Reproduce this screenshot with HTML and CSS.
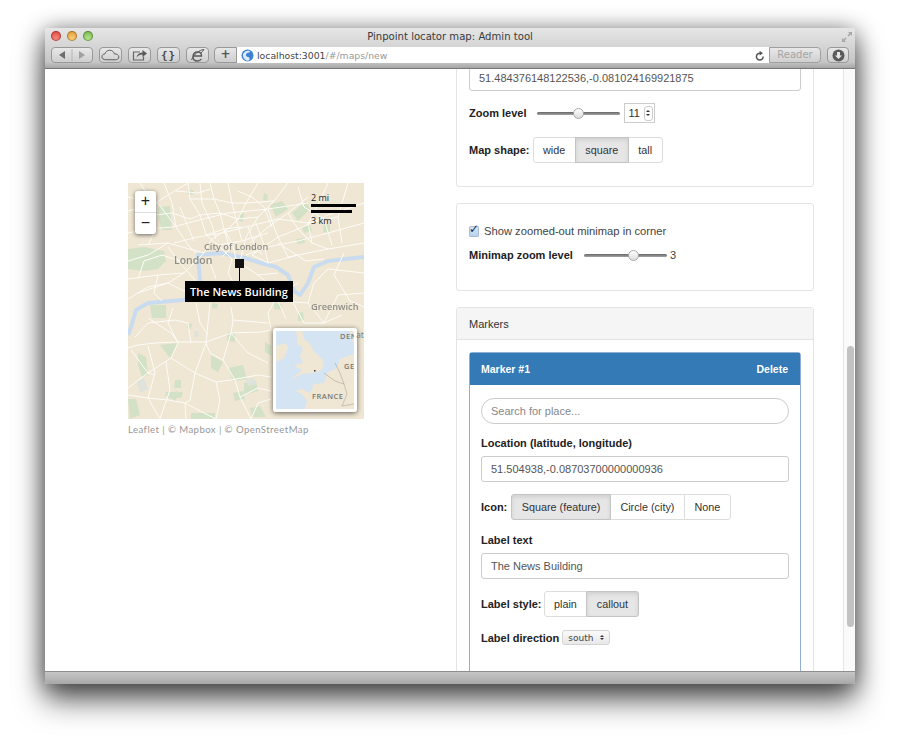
FILE: index.html
```html
<!DOCTYPE html>
<html lang="en">
  <head>
    <meta charset="UTF-8" />
    <title>Pinpoint locator map: Admin tool</title>
    <link rel="stylesheet" href="styles.css">
  </head>
  <body>
    <div class="window">
      <div class="chrome">
        <div class="titleRow">
          <div class="lights">
            <span class="light red"></span>
            <span class="light amber"></span>
            <span class="light green"></span>
          </div>
          <div class="windowTitle">Pinpoint locator map: Admin tool</div>
          <svg class="fullscreen" width="12" height="12" viewBox="0 0 12 12">
            <path d="M7 1h4v4L9.600 3.600 7.600 5.600 6.400 4.400 8.400 2.400zM5 11H1V7l1.400 1.400 2-2 1.200 1.200-2 2z" fill="#a8a8a8" />
          </svg>
        </div>
        <div class="toolbar">
          <div class="tool backForward">
            <svg width="40" height="14" viewBox="0 0 40 14">
              <path d="M13 3v8L7 7z" fill="#6e6e6e" />
              <path d="M20 1v12" stroke="#b4b4b4" />
              <path d="M27 3v8l6-4z" fill="#a0a0a0" />
            </svg>
          </div>
          <div class="tool wide">
            <svg width="19" height="12" viewBox="0 0 20 12">
              <path d="M5 11C2.500 11 1 9.500 1 7.800 1 6 2.400 5 4 5 4.800 2.500 6.800 1 9.200 1c2.600 0 4.400 1.700 4.800 3.800 2.700-.2 4.800 1.300 4.800 3.300S17 11 15 11z" fill="none" stroke="#5a5a5a" />
            </svg>
          </div>
          <div class="tool wide">
            <svg width="16" height="12" viewBox="0 0 16 12">
              <path d="M8 3H1.500v8h10V7.500" fill="none" stroke="#666" stroke-width="1.200" />
              <path d="M4.500 8.500c.5-3 2.500-4.800 6-5V1L15 4.500 10.500 8V5.500C8 5.500 6 6.500 4.500 8.500z" fill="#5a5a5a" />
            </svg>
          </div>
          <div class="tool wide braces">{}</div>
          <div class="tool wide">
            <svg width="16" height="14" viewBox="0 0 16 14">
              <path d="M3 8h8.500C11.500 5.500 10 4 7.800 4 5 4 3 6 3 9c0 2.500 2 4 4.500 4 1.800 0 3-.7 3.800-2" fill="none" stroke="#5a5a5a" stroke-width="1.400" />
              <path d="M1.500 12C4 6 9 2 14 1.500c-1 1.500-2 2.500-3 3.500" fill="none" stroke="#5a5a5a" />
            </svg>
          </div>
          <div class="addressBar">
            <div class="plusButton">+</div>
            <div class="urlField">
              <svg class="globe" width="13" height="13" viewBox="0 0 13 13">
                <circle cx="6.500" cy="6.500" r="6" fill="#3d82d6" />
                <path d="M2 5c1.500-3 4.500-4 6.500-3 1 .6.500 1.500-.5 1.500S5.500 4 5 5.500 6 8 7 8s2 1 1.500 2.500-2 1.500-3 1C3 10.500 1.500 8 2 5z" fill="#dcebfa" />
              </svg>
              <span class="urlHost">localhost:3001</span><span class="urlPath">/#/maps/new</span>
              <svg class="reload" width="10" height="11" viewBox="0 0 10 11">
                <path d="M8.200 6.500A3.400 3.400 0 1 1 5 3.200" fill="none" stroke="#555" stroke-width="1.500" />
                <path d="M4.600 .8 8 3.200 4.600 5.400z" fill="#555" />
              </svg>
            </div>
            <div class="readerButton">Reader</div>
          </div>
          <div class="tool download">
            <svg width="13" height="13" viewBox="0 0 13 13">
              <circle cx="6.500" cy="6.500" r="6" fill="#5a5a5a" />
              <path d="M5 3h3v3.500h2l-3.500 3.500L3 6.500h2z" fill="#e4e4e4" />
            </svg>
          </div>
        </div>
      </div>

      <div class="content">
        <div class="mapColumn">
          <div class="map">
            <svg class="mapTiles" width="236" height="236" viewBox="0 0 236 236">
              <rect width="236" height="236" fill="#efe6d3" />
              <g fill="#d3e2c6">
                <path d="M0 66l16-2 20 4 2 10-8 8-14 2-16-2z" />
                <path d="M30 24l12-1 2 24-10 0-4-12z" />
                <path d="M22 122h16v13H24z" />
                <path d="M32 162l18-2-8 15z" />
                <path d="M83 172l12 7-5 10-7-4z" />
                <path d="M10 170l8 4 2 18-6 2-4-12z" />
                <path d="M100 185l15-3 4 14-14 2z" />
                <path d="M37 209h18l-2 6H40z" />
                <path d="M47 197h6v8h-7z" />
                <path d="M100 149l7 1v9l-8-1z" />
                <path d="M63 230h24v6H63z" />
                <path d="M122 225l10-2 6 11h-14z" />
                <path d="M137 159l6 4v10l-6-4z" />
                <path d="M116 200l12-2 2 10-14 4z" />
                <path d="M105 210l10-2 2 8-10 2z" />
                <path d="M36 212l14-4-2 10z" />
                <path d="M0 216l8 0 4 16-10 4z" />
                <path d="M142 22l12-4 6 8-12 8z" />
                <path d="M164 30l14-12 4 8-12 12z" />
                <path d="M174 44l8-2 2 6-8 2z" />
                <path d="M60 6l6 2-2 4-5-1z" />
                <path d="M136 10l4 2-1 6-4-1z" />
                <path d="M112 30l4 1-1 8-4-1z" />
                <path d="M196 40l6 2 0 8-7-1z" />
                <path d="M168 56l8-1 1 5-8 1z" />
                <path d="M84 120l6 1-1 5-5-1z" />
                <path d="M60 140l4 1-1 5-4-1z" />
                <path d="M170 130l5-1 1 8-6 1z" />
                <path d="M146 120l8 1-1 6-7-1z" />
              </g>
              <g fill="#dfe3dc">
                <path d="M8 198l8-2 4 10-8 4z" />
                <path d="M118 196l8-1 2 6-8 2z" />
                <path d="M66 148l4 0 1 6-4 0z" />
              </g>
              <path d="M0 152 3 144 8 127 20 120 55 117 66 112 72 97 70 72 93 70 117 75 133 80 148 84 160 92 166 108 172 112 180 100 186 84 200 78 236 74" fill="none" stroke="#c9dcef" stroke-width="4" stroke-linejoin="round" />
              <g fill="none" stroke="#fdfcf8" stroke-width="1">
                <path d="M0 50 20 46 45 44 75 36 100 30 140 26 180 20" />
                <path d="M0 28 25 22 40 12 60 0" />
                <path d="M0 14 30 20 48 44 60 62 68 70" />
                <path d="M12 0 24 18 28 46 20 62" />
                <path d="M60 0 62 16 72 32 78 52 90 62 104 76" />
                <path d="M82 0 86 16 92 30 96 46 104 60 108 76" />
                <path d="M100 0 104 20 108 36 114 58" />
                <path d="M130 0 118 20 110 36 100 46 84 56 76 70" />
                <path d="M160 0 146 18 130 34 118 54 114 70 112 80" />
                <path d="M180 14 160 30 140 44 122 60" />
                <path d="M236 20 200 32 170 46 150 54 124 72" />
                <path d="M236 40 200 50 170 58 140 64 118 72" />
                <path d="M46 60 70 54 94 50 118 44 150 36 180 40 210 34" />
                <path d="M10 62 40 60 76 70 56 90 40 100 10 110" />
                <path d="M40 64 52 80 66 96 74 114" />
                <path d="M0 96 30 92 56 90" />
                <path d="M0 116 20 104 40 100 60 110" />
                <path d="M104 76 100 90 112 112" />
                <path d="M80 74 88 96" />
                <path d="M112 80 130 92 150 90" />
                <path d="M124 72 140 80 170 72 200 66 236 60" />
                <path d="M150 54 160 74 170 72" />
                <path d="M236 90 200 86 186 100 180 120 196 140" />
                <path d="M170 100 150 112 140 130 143 147" />
                <path d="M236 110 210 112 196 140" />
                <path d="M150 118 180 120" />
                <path d="M200 0 190 22 180 40 184 60 200 66" />
                <path d="M220 0 210 34 214 60" />
                <path d="M36 0 44 20 48 44" />
                <path d="M72 32 92 30 110 36 130 34" />
                <path d="M78 52 96 46 114 44" />
                <path d="M62 16 86 16 104 20 118 20 146 18" />
                <path d="M44 30 62 36 72 32" />
                <path d="M0 78 20 72 40 60" />
                <path d="M90 62 114 58 140 50" />
                <path d="M128 40 136 62 140 80" />
                <path d="M160 30 170 46 184 60" />
                <path d="M140 26 146 44 150 54" />
                <path d="M30 92 26 110 34 118" />
                <path d="M48 8 70 10 82 6" />
                <path d="M8 34 28 32 44 30" />
                <path d="M52 24 60 44 66 58" />
                <path d="M72 0 74 20 84 42 88 56" />
                <path d="M110 8 124 14 136 24 144 44" />
                <path d="M120 44 126 60 134 72" />
                <path d="M96 46 102 66 94 74" />
                <path d="M170 4 176 24 196 36 204 62" />
                <path d="M150 60 178 78 196 76" />
                <path d="M216 70 206 92 222 118 236 124" />
                <path d="M160 110 176 140 196 140 214 132" />
                <path d="M58 80 34 72 16 78 10 96" />
                <path d="M130 92 144 104 150 118 158 136" />
                <path d="M0 165 10 162 27 160 50 159 78 159 103 150 133 149 143 147" />
                <path d="M78 160 82 170 95 177 107 197 112 214 123 236" />
                <path d="M82 120 78 160 67 190 62 217 57 220" />
                <path d="M43 175 67 190 88 199 103 197 130 192 143 194" />
                <path d="M0 205 17 192 43 175 50 160 40 140 45 125" />
                <path d="M88 199 92 217 88 236" />
                <path d="M0 212 20 215 40 217 57 220 58 236" />
                <path d="M3 167 20 190 27 192" />
                <path d="M20 163 27 190 20 215 32 236" />
                <path d="M38 179 42 207 32 236" />
                <path d="M68 120 72 140 80 152" />
                <path d="M103 124 105 137 103 150 95 177" />
                <path d="M105 137 140 140" />
                <path d="M20 135 43 150 50 159" />
                <path d="M63 160 60 140 47 137 20 140 7 154" />
                <path d="M112 214 130 205 143 208" />
                <path d="M57 220 76 230 88 236" />
                <path d="M140 180 120 170 103 150" />
                <path d="M123 236 130 220 143 216" />
              </g>
              <text class="cityLabel" x="76" y="67">City of London</text>
              <text class="townLabel" x="46" y="81">London</text>
              <text class="cityLabel" x="183" y="127">Greenwich</text>
            </svg>

            <div class="zoomControl">
              <div class="zoomStep">+</div>
              <div class="zoomStep">−</div>
            </div>

            <div class="scale">
              <div>2 mi</div>
              <div class="scaleBar miles"></div>
              <div class="scaleBar kilometres"></div>
              <div>3 km</div>
            </div>

            <div class="marker">
              <div class="markerSquare"></div>
              <div class="markerStem"></div>
              <div class="markerLabel">The News Building</div>
            </div>

            <svg class="minimap" width="84" height="84" viewBox="0 0 78 78">
              <rect width="78" height="78" fill="#d5e4f2" />
              <g fill="#efe6d3">
                <path d="M20 0H26L28 8 34 13 38 20 46 28 48 35 44 40 36 42 26 43 16 48 21 43 26 39 22 37 18 34 27 32 25 27 24 25 27 17 21 13 21 7z" />
                <path d="M0 15 10 12 12 17 8 27 0 31z" />
                <path d="M19 60 26 58 34 62 38 53 48 52 51 42 61 37 64 28 78 23V78H29L31 70 26 63z" />
                <path d="M74 0H78V13L75 8z" />
              </g>
              <path d="M48 42 59 50 68 53 71 63 66 75 78 73M59 32 64 42 68 53" fill="none" stroke="#a09d8e" stroke-width=".5" />
              <rect x="38" y="39" width="1.500" height="1.500" fill="#333" />
              <text class="miniLabel" x="36" y="68">FRANCE</text>
              <text class="miniLabel" x="64" y="8">DEN</text>
              <text class="miniLabel" x="68" y="38">GE</text>
            </svg>
            <span class="mapFragment">at</span>
          </div>
          <div class="attribution">Leaflet | © Mapbox | © OpenStreetMap</div>
        </div>

        <div class="formColumn">
          <div class="panel firstPanel">
            <div class="textInput cutOff">51.484376148122536,-0.081024169921875</div>
            <div class="inlineRow zoomRow">
              <label class="fieldLabel">Zoom level</label>
              <input class="slider" type="range" min="1" max="21" value="11" />
              <div class="numberBox">
                <span>11</span>
                <span class="spinner"><i class="up"></i><i class="down"></i></span>
              </div>
            </div>
            <div class="inlineRow shapeRow">
              <label class="fieldLabel">Map shape:</label>
              <div class="buttonGroup">
                <button class="groupBtn">wide</button>
                <button class="groupBtn active">square</button>
                <button class="groupBtn">tall</button>
              </div>
            </div>
          </div>

          <div class="panel minimapPanel">
            <label class="checkRow">
              <input type="checkbox" checked />
              Show zoomed-out minimap in corner
            </label>
            <div class="inlineRow minimapRow">
              <label class="fieldLabel">Minimap zoom level</label>
              <input class="slider" type="range" min="-5" max="8" value="3" />
              <span class="sliderValue">3</span>
            </div>
          </div>

          <div class="panel markersPanel">
            <div class="panelHeading">Markers</div>
            <div class="panelBody">
              <div class="markerPanel">
                <div class="markerHeading">
                  <span>Marker #1</span>
                  <span>Delete</span>
                </div>
                <div class="markerBody">
                  <input class="searchInput" type="text" placeholder="Search for place..." />
                  <div class="stackLabel">Location (latitude, longitude)</div>
                  <div class="textInput">51.504938,-0.08703700000000936</div>
                  <div class="inlineRow iconRow">
                    <label class="fieldLabel">Icon:</label>
                    <div class="buttonGroup">
                      <button class="groupBtn active">Square (feature)</button>
                      <button class="groupBtn">Circle (city)</button>
                      <button class="groupBtn">None</button>
                    </div>
                  </div>
                  <div class="stackLabel labelTextHead">Label text</div>
                  <div class="textInput">The News Building</div>
                  <div class="inlineRow styleRow">
                    <label class="fieldLabel">Label style:</label>
                    <div class="buttonGroup">
                      <button class="groupBtn">plain</button>
                      <button class="groupBtn active">callout</button>
                    </div>
                  </div>
                  <div class="inlineRow directionRow">
                    <label class="fieldLabel">Label direction</label>
                    <div class="selectBox">
                      <span>south</span>
                      <span class="selectArrows"><i class="up"></i><i class="down"></i></span>
                    </div>
                  </div>
                </div>
              </div>
            </div>
          </div>
        </div>

        <div class="scrollTrack">
          <div class="scrollThumb"></div>
        </div>
      </div>

      <div class="statusBar"></div>
    </div>
  </body>
</html>
```
FILE: styles.css
```css
html,
body {
  height: 100%;
}
body {
  margin: 0;
  background: #fff;
  overflow: hidden;
  font-family: "Liberation Sans", Arial, sans-serif;
  font-size: 11px;
  color: #333;
}
.window {
  width: 810px;
  margin: 28px 0 0 45px;
  border-radius: 4px 4px 2px 2px;
  box-shadow: 0 16px 30px rgba(0, 0, 0, 0.62), 0 2px 22px rgba(0, 0, 0, 0.45);
}

/* Browser chrome */
.chrome {
  height: 41px;
  box-sizing: border-box;
  background: linear-gradient(#e6e6e6, #c6c6c6 85%, #a6a6a6);
  border-bottom: 1px solid #777;
  border-radius: 4px 4px 0 0;
}
.titleRow {
  height: 17px;
  position: relative;
  display: flex;
  justify-content: center;
  align-items: center;
}
.windowTitle {
  font-family: "DejaVu Sans", sans-serif;
  font-size: 10.100px;
  color: #3a3a3a;
}
.lights {
  position: absolute;
  left: 6px;
  top: 3px;
  display: flex;
  gap: 6px;
}
.light {
  width: 10px;
  height: 10px;
  border-radius: 50%;
  box-shadow: inset 0 0 0 1px rgba(0, 0, 0, 0.25);
}
.light.red {
  background: radial-gradient(circle at 50% 70%, #f78a80, #d8342a);
}
.light.amber {
  background: radial-gradient(circle at 50% 70%, #f8cf7c, #d98a1e);
}
.light.green {
  background: radial-gradient(circle at 50% 70%, #b6e48c, #62aa3c);
}
.fullscreen {
  position: absolute;
  right: 2px;
  top: 3px;
}
.toolbar {
  display: flex;
  align-items: flex-start;
  margin-top: 2px;
  padding-left: 6px;
  gap: 6px;
}
.tool {
  height: 16px;
  box-sizing: border-box;
  display: flex;
  align-items: center;
  justify-content: center;
  border: 1px solid #999;
  border-radius: 4px;
  background: linear-gradient(#e8e8e8, #cecece);
}
.backForward {
  width: 42px;
}
.wide {
  width: 23px;
}
.braces {
  font: 11px "DejaVu Sans Mono", monospace;
  font-weight: bold;
  letter-spacing: 1px;
  color: #4a4a4a;
}
.download {
  width: 22px;
}
.addressBar {
  display: flex;
  width: 607px;
  height: 16px;
  margin-left: -1px;
}
.plusButton {
  width: 23px;
  box-sizing: border-box;
  text-align: center;
  font: bold 12px/13px "DejaVu Sans", sans-serif;
  color: #555;
  border: 1px solid #999;
  border-radius: 4px 0 0 4px;
  background: linear-gradient(#e8e8e8, #cecece);
}
.urlField {
  flex: 1;
  display: flex;
  align-items: center;
  background: #fff;
  padding-left: 4px;
  font-family: "DejaVu Sans", sans-serif;
  font-size: 9.300px;
}
.globe {
  margin-right: 3px;
}
.urlHost {
  color: #444;
}
.urlPath {
  color: #999;
}
.reload {
  margin-left: auto;
  margin-right: 4px;
}
.readerButton {
  width: 52px;
  box-sizing: border-box;
  text-align: center;
  font-family: "DejaVu Sans", sans-serif;
  font-size: 10px;
  line-height: 14px;
  color: #a4a4a4;
  border: 1px solid #a0a0a0;
  border-radius: 0 4px 4px 0;
  background: linear-gradient(#e8e8e8, #d0d0d0);
}

/* Page */
.content {
  display: flex;
  height: 602px;
  background: #fff;
  overflow: hidden;
}
.mapColumn {
  width: 411px;
  flex-shrink: 0;
  padding: 114px 0 0 83px;
  box-sizing: border-box;
}
.map {
  position: relative;
  width: 236px;
  height: 236px;
}
.mapTiles {
  display: block;
  filter: blur(0.35px);
}
.cityLabel,
.townLabel,
.miniLabel {
  font-family: "Open Sans", sans-serif;
  fill: #8f8f88;
}
.cityLabel {
  font-size: 9.200px;
  font-weight: 600;
}
.townLabel {
  font-size: 10.500px;
  font-weight: 600;
}
.miniLabel {
  font-size: 7.500px;
  font-weight: 600;
  letter-spacing: 0.5px;
  fill: #777770;
}
.mapFragment {
  position: absolute;
  right: 0;
  top: 146px;
  font: 600 8px "Open Sans", sans-serif;
  color: #8f8f88;
}
.zoomControl {
  position: absolute;
  left: 7px;
  top: 8px;
  width: 21px;
  background: #fff;
  border-radius: 3px;
  box-shadow: 0 1px 4px rgba(0, 0, 0, 0.55);
}
.zoomStep {
  height: 21px;
  text-align: center;
  font: 16px/20px "Liberation Sans", sans-serif;
  color: #222;
}
.zoomStep + .zoomStep {
  border-top: 1px solid #ddd;
}
.scale {
  position: absolute;
  left: 183px;
  top: 9px;
  font: 9px/11px "Open Sans", sans-serif;
  color: #222;
}
.scaleBar {
  height: 3px;
  background: #000;
}
.scaleBar.miles {
  width: 45px;
  margin: 1px 0 3px;
}
.scaleBar.kilometres {
  width: 41px;
  margin-bottom: 2px;
}
.marker {
  position: absolute;
  left: 57px;
  top: 76px;
  width: 108px;
  display: flex;
  flex-direction: column;
  align-items: center;
}
.markerSquare {
  width: 9px;
  height: 9px;
  background: #111;
}
.markerStem {
  width: 1px;
  height: 13px;
  background: #000;
}
.markerLabel {
  width: 108px;
  height: 21px;
  text-align: center;
  background: #000;
  color: #fff;
  font: 600 11px/21px "Open Sans", sans-serif;
  white-space: nowrap;
}
.minimap {
  position: absolute;
  left: 145px;
  top: 145px;
  box-sizing: border-box;
  border: 3px solid #fff;
  border-radius: 3px;
  box-shadow: 0 1px 5px rgba(0, 0, 0, 0.6);
}
.attribution {
  margin-top: 4px;
  font: 9.600px/14px "Lato", sans-serif;
  letter-spacing: 0.42px;
  color: #979797;
  white-space: nowrap;
}

/* Form column */
.formColumn {
  width: 358px;
  flex-shrink: 0;
}
.panel {
  border: 1px solid #e4e4e4;
  border-radius: 3px;
  box-sizing: border-box;
  margin-bottom: 16px;
  background: #fff;
}
.firstPanel {
  height: 138px;
  margin-top: -20px;
  padding: 0 12px;
}
.textInput {
  height: 26px;
  box-sizing: border-box;
  border: 1px solid #ccc;
  border-radius: 3px;
  padding: 0 9px;
  line-height: 24px;
  color: #555;
}
.cutOff {
  margin-top: 15px;
}
.inlineRow {
  display: flex;
  align-items: center;
}
.fieldLabel {
  font-weight: bold;
  color: #222;
  white-space: nowrap;
}
.zoomRow {
  margin-top: 12px;
  height: 20px;
}
.zoomRow .slider {
  margin-left: 11px;
}
.shapeRow {
  margin-top: 14px;
}
.shapeRow .fieldLabel {
  margin-right: 3px;
}
.iconRow .fieldLabel {
  margin-right: 4px;
}
.styleRow .fieldLabel {
  margin-right: 2px;
}
.slider {
  -webkit-appearance: none;
  appearance: none;
  width: 83px;
  height: 14px;
  margin: 0;
  background: transparent;
}
.slider::-webkit-slider-runnable-track {
  height: 3px;
  border-radius: 2px;
  background: linear-gradient(#666, #a4a4a4);
}
.slider::-webkit-slider-thumb {
  -webkit-appearance: none;
  width: 11px;
  height: 11px;
  margin-top: -4px;
  border-radius: 50%;
  border: 1px solid #aaa;
  box-sizing: border-box;
  background: linear-gradient(#fff, #ddd);
}
.numberBox {
  width: 31px;
  height: 20px;
  margin-left: 4px;
  box-sizing: border-box;
  border: 1px solid #ccc;
  display: flex;
  align-items: center;
  padding-left: 3px;
  gap: 4px;
}
.spinner,
.selectArrows {
  display: flex;
  flex-direction: column;
  gap: 2px;
  align-items: center;
}
.spinner {
  width: 9px;
  height: 15px;
  justify-content: center;
  box-sizing: border-box;
  border: 1px solid #ccc;
  border-radius: 3px;
}
.up,
.down {
  width: 0;
  height: 0;
  border-left: 2px solid transparent;
  border-right: 2px solid transparent;
}
.up {
  border-bottom: 2px solid #333;
}
.down {
  border-top: 2px solid #333;
}
.buttonGroup {
  display: flex;
}
.groupBtn {
  height: 26px;
  padding: 0 9.500px;
  margin: 0 0 0 -1px;
  font: inherit;
  font-size: 10.800px;
  color: #333;
  background: #fff;
  border: 1px solid #ddd;
}
.groupBtn:first-child {
  margin-left: 0;
  border-radius: 3px 0 0 3px;
}
.groupBtn:last-child {
  border-radius: 0 3px 3px 0;
}
.groupBtn.active {
  position: relative;
  background: #e6e6e6;
  border-color: #c4c4c4;
  box-shadow: inset 0 2px 4px rgba(0, 0, 0, 0.1);
}
.minimapPanel {
  height: 88px;
  padding: 19px 12px 0;
}
.checkRow {
  display: flex;
  align-items: center;
  gap: 5px;
  height: 16px;
  font-size: 11.200px;
  color: #444;
}
.checkRow input {
  -webkit-appearance: none;
  appearance: none;
  position: relative;
  margin: 0;
  width: 10px;
  height: 11px;
  border-radius: 2px;
  background: linear-gradient(#d8e8f8, #b4d0ee);
  box-shadow: inset 0 0 0 1px #a8bcd4;
}
.checkRow input::after {
  content: "✓";
  position: absolute;
  left: 0;
  top: -3px;
  font: bold 12px/13px "DejaVu Sans", sans-serif;
  color: #1a2a40;
}
.minimapRow {
  margin-top: 8px;
  height: 16px;
}
.minimapRow .slider {
  margin-left: 11px;
}
.sliderValue {
  margin-left: 3px;
  color: #444;
}
.panelHeading {
  height: 32px;
  box-sizing: border-box;
  padding: 0 12px;
  line-height: 32px;
  background: #f5f5f5;
  border-bottom: 1px solid #e2e2e2;
}
.panelBody {
  padding: 12px 12px 0;
}
.markerPanel {
  border: 1px solid #8fb0d4;
  border-radius: 3px;
  height: 400px;
}
.markerHeading {
  height: 32px;
  padding: 0 12px 0 11px;
  display: flex;
  justify-content: space-between;
  align-items: center;
  background: #337ab7;
  color: #fff;
  font-weight: bold;
  font-size: 10.500px;
}
.markerBody {
  padding: 13px 11px 0;
}
.searchInput {
  display: block;
  width: 100%;
  height: 26px;
  box-sizing: border-box;
  padding: 0 9px;
  border: 1px solid #ccc;
  border-radius: 13px;
  font: inherit;
}
.searchInput::placeholder {
  color: #888;
}
.stackLabel {
  font-weight: bold;
  color: #222;
  line-height: 15px;
  margin: 12px 0 5px;
}
.labelTextHead {
  margin-top: 13px;
}
.iconRow {
  margin-top: 12px;
}
.styleRow {
  margin-top: 12px;
}
.directionRow {
  margin-top: 13px;
}
.selectBox {
  margin-left: 3px;
  width: 48px;
  height: 15px;
  box-sizing: border-box;
  padding: 0 5px;
  display: flex;
  align-items: center;
  justify-content: space-between;
  border: 1px solid #d4d4d4;
  border-radius: 3px;
  background: linear-gradient(#fafafa, #e8e8e8);
  font: 9px "DejaVu Sans", sans-serif;
  color: #444;
}
.selectArrows {
  gap: 1px;
}

/* Scrollbar */
.scrollTrack {
  margin-left: 29px;
  flex: 1;
  position: relative;
  background: #fafafa;
  border-left: 1px solid #e6e6e6;
}
.scrollThumb {
  position: absolute;
  left: 3px;
  top: 277px;
  width: 7px;
  height: 281px;
  border-radius: 4px;
  background: #c2c2c2;
}
.statusBar {
  height: 13px;
  background: linear-gradient(#c6c6c6, #a8a8a8);
  border-top: 1px solid #8e8e8e;
  box-sizing: border-box;
  border-radius: 0 0 2px 2px;
}
```
